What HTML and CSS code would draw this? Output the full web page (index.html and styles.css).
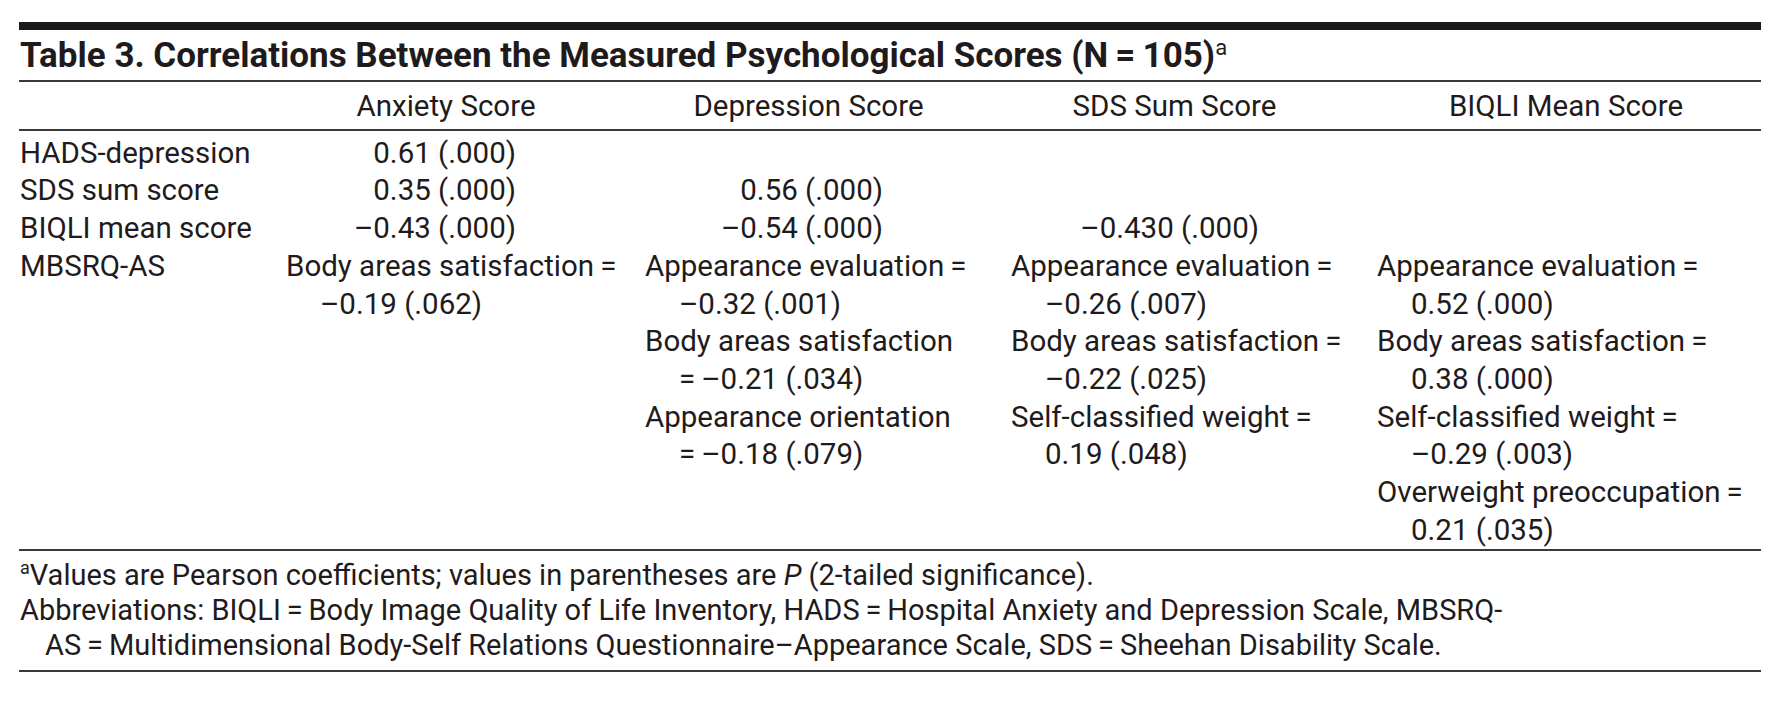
FILE: index.html
```html
<!DOCTYPE html>
<html lang="en">
<head>
<meta charset="utf-8">
<title>Table 3</title>
<link rel="stylesheet" href="styles.css">
</head>
<body>
<div class="table-wrap">
  <div class="caption">Table 3. Correlations Between the Measured Psychological Scores (N&#8201;=&#8201;105)<sup class="sup">a</sup></div>
  <div class="head grid">
    <div class="stub"></div>
    <div class="hcell">Anxiety Score</div>
    <div class="hcell">Depression Score</div>
    <div class="hcell">SDS Sum Score</div>
    <div class="hcell">BIQLI Mean Score</div>
  </div>
  <div class="body grid">
    <div class="stub">HADS-depression</div>
    <div class="cell"><span class="num n1">0.61 (.000)</span></div>
    <div class="cell"></div>
    <div class="cell"></div>
    <div class="cell"></div>

    <div class="stub">SDS sum score</div>
    <div class="cell"><span class="num n1">0.35 (.000)</span></div>
    <div class="cell"><span class="num n2">0.56 (.000)</span></div>
    <div class="cell"></div>
    <div class="cell"></div>

    <div class="stub">BIQLI mean score</div>
    <div class="cell"><span class="num n1">&#8211;0.43 (.000)</span></div>
    <div class="cell"><span class="num n2">&#8211;0.54 (.000)</span></div>
    <div class="cell"><span class="num n3">&#8211;0.430 (.000)</span></div>
    <div class="cell"></div>

    <div class="stub">MBSRQ-AS</div>
    <div class="cell">
      <div class="entry"><span class="lbl">Body areas satisfaction&#8201;=</span><span class="val">&#8211;0.19 (.062)</span></div>
    </div>
    <div class="cell">
      <div class="entry"><span class="lbl">Appearance evaluation&#8201;=</span><span class="val">&#8211;0.32 (.001)</span></div>
      <div class="entry"><span class="lbl">Body areas satisfaction</span><span class="val">=&#8201;&#8211;0.21 (.034)</span></div>
      <div class="entry"><span class="lbl">Appearance orientation</span><span class="val">=&#8201;&#8211;0.18 (.079)</span></div>
    </div>
    <div class="cell">
      <div class="entry"><span class="lbl">Appearance evaluation&#8201;=</span><span class="val">&#8211;0.26 (.007)</span></div>
      <div class="entry"><span class="lbl">Body areas satisfaction&#8201;=</span><span class="val">&#8211;0.22 (.025)</span></div>
      <div class="entry"><span class="lbl">Self-classified weight&#8201;=</span><span class="val">0.19 (.048)</span></div>
    </div>
    <div class="cell">
      <div class="entry"><span class="lbl">Appearance evaluation&#8201;=</span><span class="val">0.52 (.000)</span></div>
      <div class="entry"><span class="lbl">Body areas satisfaction&#8201;=</span><span class="val">0.38 (.000)</span></div>
      <div class="entry"><span class="lbl">Self-classified weight&#8201;=</span><span class="val">&#8211;0.29 (.003)</span></div>
      <div class="entry"><span class="lbl">Overweight preoccupation&#8201;=</span><span class="val">0.21 (.035)</span></div>
    </div>
  </div>
  <div class="notes">
    <span class="note"><sup class="fsup">a</sup>Values are Pearson coefficients; values in parentheses are <i>P</i> (2-tailed significance).</span>
    <span class="note">Abbreviations: BIQLI&#8201;=&#8201;Body Image Quality of Life Inventory, HADS&#8201;=&#8201;Hospital Anxiety and Depression Scale, MBSRQ-</span>
    <span class="note indent">AS&#8201;=&#8201;Multidimensional Body-Self Relations Questionnaire&#8211;Appearance Scale, SDS&#8201;=&#8201;Sheehan Disability Scale.</span>
  </div>
</div>
</body>
</html>
```
FILE: styles.css
```css
html, body {
  margin: 0;
  padding: 0;
  background: #ffffff;
}

body {
  font-family: Roboto, "Liberation Sans", sans-serif;
  color: #1f1b1c;
}

.table-wrap {
  margin: 22px 0 0 19px;
  width: 1742px;
  border-top: 8px solid #1a1a1a;
  border-bottom: 2px solid #3a3a3a;
}

.caption {
  font-weight: 700;
  font-size: 35px;
  line-height: 40px;
  padding: 6px 0 4px 1px;
  border-bottom: 2px solid #3a3a3a;
  white-space: nowrap;
}

.sup {
  font-size: 22px;
  font-weight: 400;
  vertical-align: 12px;
  line-height: 0;
}

.grid {
  display: grid;
  grid-template-columns: 227px 320px 327px 327px 378px;
  column-gap: 39px;
  padding-left: 1px;
  font-size: 29.5px;
  line-height: 37.7px;
}

.head {
  padding-top: 6px;
  padding-bottom: 3px;
  border-bottom: 2px solid #3a3a3a;
}

.hcell {
  text-align: center;
  white-space: nowrap;
}

.body {
  padding-top: 4px;
}

.stub,
.cell {
  white-space: nowrap;
}

.num {
  display: block;
  text-align: right;
}

.n1 { width: 230px; }
.n2 { width: 238px; }
.n3 { width: 248px; }

.entry .lbl,
.entry .val {
  display: block;
}

.entry .val {
  padding-left: 34px;
}

.notes {
  font-size: 29px;
  line-height: 35px;
  padding: 7px 0 7px 1px;
  border-top: 2px solid #3a3a3a;
}

.note {
  display: block;
  white-space: nowrap;
}

.note.indent {
  padding-left: 25px;
}

.fsup {
  font-size: 18px;
  vertical-align: 11px;
  line-height: 0;
}
```
